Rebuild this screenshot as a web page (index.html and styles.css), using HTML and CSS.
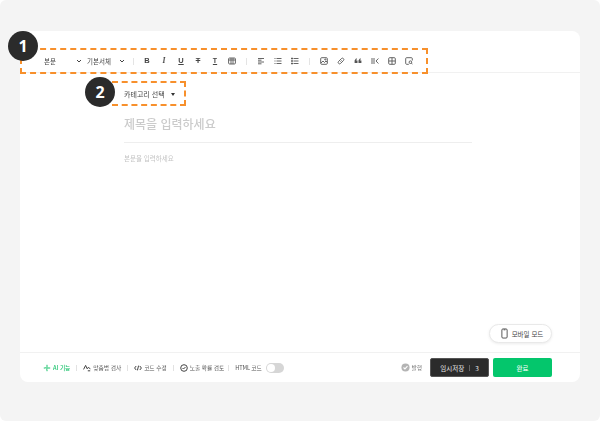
FILE: index.html
```html
<!DOCTYPE html>
<html lang="ko">
<head>
<meta charset="utf-8">
<title>글쓰기</title>
<link rel="stylesheet" href="styles.css">
</head>
<body>
<main class="page">
  <section class="editor">
    <div class="toolbar">
      <span class="tool-select tool-select-para">본문<svg class="caret-line" viewBox="0 0 6 4"><path d="M1 1l2 2 2-2"/></svg></span>
      <span class="tool-select tool-select-font">기본서체<svg class="caret-line" viewBox="0 0 6 4"><path d="M1 1l2 2 2-2"/></svg></span>
      <i class="divider"></i>
      <div class="tool-group">
        <span class="glyph glyph-b">B</span>
        <span class="glyph glyph-i">I</span>
        <span class="glyph glyph-u">U</span>
        <span class="glyph glyph-s">T</span>
        <span class="glyph glyph-t">T</span>
        <svg class="icon" viewBox="0 0 8 8"><rect x=".6" y="1" width="6.8" height="6" rx="1"/><path d="M.6 3h6.8M3 1v6M5 1v6"/></svg>
      </div>
      <i class="divider"></i>
      <div class="tool-group">
        <svg class="icon" viewBox="0 0 8 8"><path d="M1 1.5h6M1 3.2h3.5M1 5h6M1 6.8h3.5"/></svg>
        <svg class="icon" viewBox="0 0 8 8"><path d="M2.5 1.5h5M2.5 4h5M2.5 6.5h5M.5 1.5h1M.5 4h1M.5 6.5h1"/></svg>
        <svg class="icon" viewBox="0 0 8 8"><path d="M2.5 1.5h5M2.5 4h5M2.5 6.5h5M.5 1h1v1h-1zM.5 3.5h1v1h-1zM.5 6h1v1h-1z"/></svg>
      </div>
      <i class="divider"></i>
      <div class="tool-group">
        <svg class="icon" viewBox="0 0 8 8"><rect x=".7" y=".7" width="6.6" height="6.6" rx="1"/><path d="M1 6l2-2 1.5 1.5L6 4l1.3 1.3"/><circle cx="5.3" cy="2.5" r=".6"/></svg>
        <svg class="icon" viewBox="0 0 8 8"><path d="M3.4 4.6l1.2-1.2M3 3L1.6 4.4a1.4 1.4 0 002 2L5 5M3 3l1.4-1.4a1.4 1.4 0 012 2L5 5"/></svg>
        <svg class="icon icon-solid" viewBox="0 0 8 8"><path d="M.6 6V3.6L2 1.5h1L2.2 3.4H3.5V6zM4.5 6V3.6L5.9 1.5h1L6.1 3.4h1.3V6z"/></svg>
        <svg class="icon" viewBox="0 0 8 8"><path d="M1 1v6M3 1v6M7.4 1.5L5 4l2.4 2.5"/></svg>
        <svg class="icon" viewBox="0 0 8 8"><rect x=".7" y=".7" width="6.6" height="6.6" rx="1"/><path d="M.7 4h6.6M4 .7v6.6"/></svg>
        <svg class="icon" viewBox="0 0 8 8"><path d="M7.3 3.5V1.6a.9.9 0 00-.9-.9H1.6a.9.9 0 00-.9.9v4.8c0 .5.4.9.9.9h2.2"/><circle cx="5.4" cy="5.2" r="1.3"/><path d="M6.4 6.2l1.1 1.1"/></svg>
      </div>
    </div>

    <div class="compose">
      <div class="category">카테고리 선택<i class="caret-solid"></i></div>
      <div class="title-field">제목을 입력하세요</div>
      <div class="body-field">본문을 입력하세요</div>
      <button class="mobile-mode" type="button">
        <svg class="phone" viewBox="0 0 8 12"><rect x="1" y=".8" width="6" height="10.4" rx="1.2"/><path d="M3 1.8h2"/></svg>
        모바일 모드
      </button>
    </div>

    <footer class="bottom-bar">
      <div class="bottom-tools">
        <span class="tool-ai"><svg class="mini mini-ai" viewBox="0 0 8 8"><path d="M4 .8v1.6M4 5.6v1.6M.8 4h1.6M5.6 4h1.6M4 2.6L5.4 4 4 5.4 2.6 4z"/></svg>AI 기능</span>
        <i class="bar-divider"></i>
        <span class="tool-item"><svg class="mini mini-dark" viewBox="0 0 8 8"><path d="M.6 5.4L2.6 1.4l1.6 3.4 1-1.4 2.2 1.4M4.8 6.8h2.4"/></svg>맞춤법 검사</span>
        <i class="bar-divider"></i>
        <span class="tool-item"><svg class="mini mini-dark" viewBox="0 0 8 8"><path d="M2.2 2L.6 4l1.6 2M5.8 2l1.6 2-1.6 2M4.6 1.6L3.4 6.4"/></svg>코드 수정</span>
        <i class="bar-divider"></i>
        <span class="tool-item"><svg class="mini mini-dark" viewBox="0 0 8 8"><circle cx="4" cy="4" r="3.3"/><path d="M2.5 4l1 1 2-2"/></svg>노출 확률 검토</span>
        <i class="bar-divider bar-divider-tight"></i>
        <span class="tool-item tool-html">HTML 코드<i class="toggle"><i class="toggle-knob"></i></i></span>
      </div>
      <div class="bottom-actions">
        <span class="visibility"><svg class="check" viewBox="0 0 10 10"><circle cx="5" cy="5" r="4.5"/><path d="M2.8 5l1.6 1.6 2.8-3"/></svg>발행</span>
        <button class="btn btn-save" type="button">임시저장<i class="save-sep"></i>3</button>
        <button class="btn btn-done" type="button">완료</button>
      </div>
    </footer>
  </section>

  <div class="marker marker-toolbar"></div>
  <div class="marker marker-category"></div>
  <span class="badge badge-one">1</span>
  <span class="badge badge-two">2</span>
</main>
</body>
</html>
```

FILE: styles.css
```css
* { box-sizing: border-box; }
html, body { margin: 0; height: 100%; }
body {
  background: #fff;
  font-family: "Noto Sans CJK KR", "Noto Sans", sans-serif;
  color: #333;
  overflow: hidden;
}
.page {
  position: relative;
  width: 600px;
  height: 421px;
  padding: 31px 20px 39px;
  background: #f4f4f4;
  border-radius: 6px;
}
.editor {
  height: 351px;
  background: #fff;
  border-radius: 8px;
  display: flex;
  flex-direction: column;
  overflow: hidden;
}

/* top toolbar */
.toolbar {
  height: 42px;
  flex: none;
  padding: 25px 0 0 24px;
  display: flex;
  align-items: flex-start;
  border-bottom: 1px solid #f1f1f1;
  font-size: 6.5px;
  line-height: 10px;
  color: #444;
}
.tool-select { display: flex; align-items: center; justify-content: space-between; width: 38px; height: 10px; filter: blur(.35px); }
.tool-select-font { margin-left: 5px; }
.caret-line { width: 6px; height: 4px; fill: none; stroke: #444; stroke-width: 1; }
.divider { width: 1px; height: 7px; margin: 1.5px 9.7px 0 10.2px; background: #e4e4e4; }
.tool-select + .divider { margin-left: 8px; margin-right: 9px; }
.tool-group { display: flex; align-items: center; gap: 9px; height: 10px; filter: blur(.35px); }
.glyph {
  width: 8px;
  text-align: center;
  font: 700 7.5px/10px "Liberation Sans", sans-serif;
  color: #444;
}
.glyph-i { font-style: italic; font-family: "Liberation Serif", serif; }
.glyph-u { text-decoration: underline; text-underline-offset: 1px; }
.glyph-s { text-decoration: line-through; }
.glyph-t { font-size: 7px; text-decoration: underline; text-underline-offset: 1px; }
.icon { width: 8px; height: 8px; flex: none; fill: none; stroke: #555; stroke-width: .9; }
.icon-solid { fill: #555; stroke: none; }

/* compose area */
.compose { position: relative; flex: 1; min-height: 0; }
.category {
  position: absolute;
  left: 104px;
  top: 15px;
  display: flex;
  align-items: center;
  gap: 6px;
  font-size: 7px;
  line-height: 12px;
  color: #444;
  filter: blur(.3px);
}
.caret-solid {
  width: 0;
  height: 0;
  border: 2.5px solid transparent;
  border-top: 3px solid #333;
  border-bottom: 0;
}
.title-field {
  position: absolute;
  left: 104px;
  top: 42px;
  width: 348px;
  height: 28px;
  border-bottom: 1px solid #eee;
  font-size: 12px;
  font-weight: 500;
  line-height: 17px;
  color: #cbcbcb;
  filter: blur(.35px);
}
.body-field {
  position: absolute;
  left: 104px;
  top: 80px;
  font-size: 6.5px;
  line-height: 10px;
  color: #c4c4c4;
  filter: blur(.3px);
}
.mobile-mode {
  position: absolute;
  right: 28px;
  bottom: 9px;
  width: 63px;
  height: 19px;
  padding: 0 0 0 3px;
  display: flex;
  align-items: center;
  justify-content: center;
  gap: 4px;
  background: #fff;
  border: 1px solid #e9e9e9;
  border-radius: 10px;
  box-shadow: 0 1px 3px rgba(0,0,0,.08);
  font: inherit;
  font-size: 6.5px;
  color: #444;
}
.phone { width: 7px; height: 11px; fill: none; stroke: #444; stroke-width: 1; }

/* bottom bar */
.bottom-bar {
  height: 30px;
  flex: none;
  display: flex;
  align-items: center;
  justify-content: space-between;
  padding: 0 28px 0 23px;
  border-top: 1px solid #f1f1f1;
  font-size: 5.7px;
  line-height: 10px;
}
.bottom-tools { display: flex; align-items: center; filter: blur(.25px); }
.bar-divider { width: 1px; height: 6px; margin: 0 6px; background: #e2e2e2; }
.bar-divider-tight { margin-left: 4px; }
.tool-ai, .tool-item { display: flex; align-items: center; gap: 2px; color: #555; white-space: nowrap; }
.tool-ai { color: #19c26b; font-weight: 500; }
.tool-html { letter-spacing: -.15px; }
.mini { width: 8px; height: 8px; flex: none; fill: none; stroke-width: 1; }
.mini-ai { stroke: #19c26b; }
.mini-dark { stroke: #444; }
.toggle {
  display: block;
  margin-left: 2px;
  width: 18px;
  height: 10px;
  padding: 1px;
  border-radius: 5px;
  background: #d6d6d6;
}
.toggle-knob { display: block; width: 8px; height: 8px; border-radius: 50%; background: #fff; }
.bottom-actions { display: flex; align-items: center; }
.visibility { display: flex; align-items: center; gap: 2px; margin-right: 8px; color: #777; filter: blur(.2px); }
.check { width: 9px; height: 9px; fill: #b4b4b4; stroke: none; }
.check path { fill: none; stroke: #fff; stroke-width: 1.2; }
.btn {
  height: 19px;
  padding: 0;
  border: 0;
  border-radius: 2px;
  font: inherit;
  font-size: 6.5px;
  display: flex;
  align-items: center;
  justify-content: center;
}
.btn-save { width: 59px; background: #2b2b2b; color: #e8e8e8; border: 1px solid #555; }
.save-sep { width: 1px; height: 6px; margin: 0 5px; background: #666; }
.btn-done { width: 59px; margin-left: 4px; background: #04c66c; color: #fff; }

/* annotation overlay */
.marker { position: absolute; border: 2px dashed #f7902c; }
.marker-toolbar { left: 20px; top: 48px; width: 408px; height: 26px; }
.marker-category { left: 112px; top: 81px; width: 74px; height: 25px; border-left-width: 0; }
.badge {
  position: absolute;
  width: 30px;
  height: 30px;
  border-radius: 50%;
  background: #2b2b2b;
  color: #fff;
  font: 700 16px/30px "Noto Sans", sans-serif;
  text-align: center;
}
.badge-one { left: 8px; top: 31px; }
.badge-two { left: 85px; top: 77px; }
```
